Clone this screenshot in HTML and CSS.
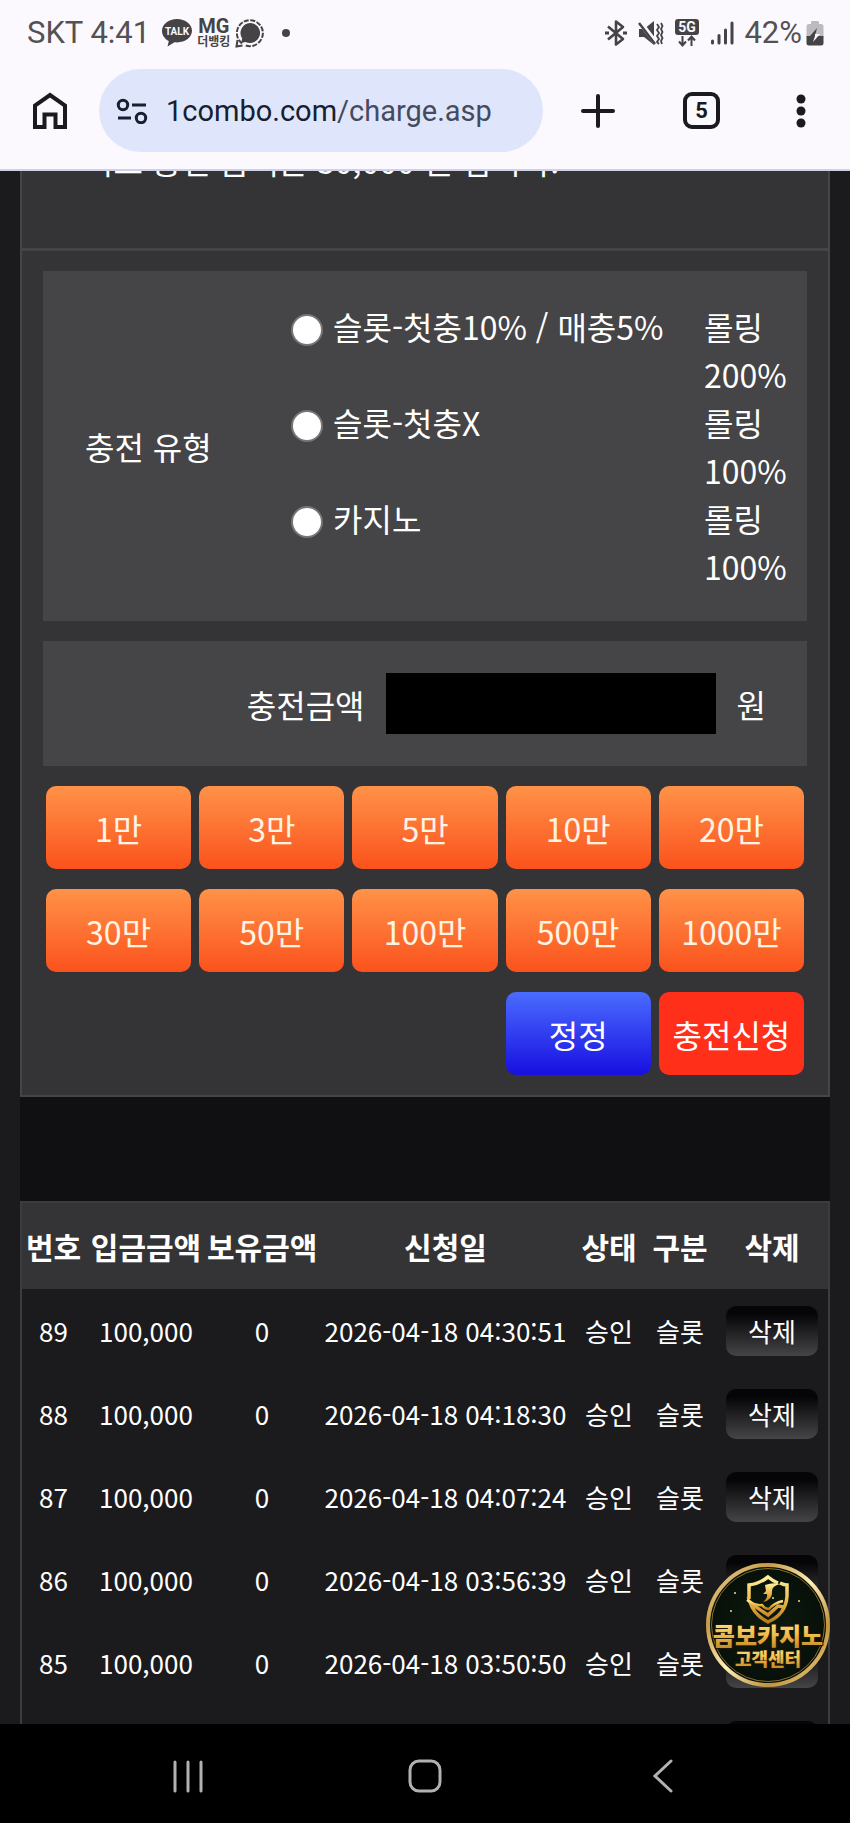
FILE: index.html
```html
<!DOCTYPE html>
<html lang="ko">
<head>
    <meta charset="utf-8">
    <meta name="viewport" content="width=device-width, initial-scale=1.0">
    <title>1combo.com</title>
    <link rel="stylesheet" href="styles.css">
</head>
<body>
<div class="phone">

    <!-- status bar + browser bar -->
    <header class="top">
        <div class="status">
            <span class="clock">SKT 4:41</span>
            <svg class="ic-talk" viewBox="0 0 30 28" width="30" height="28">
                <path d="M15 0C6.700 0 0 5.300 0 12c0 4.300 2.700 8 6.800 10.100L5.500 27.500l7-4.200c.8.100 1.600.1 2.500.1 8.300 0 15-5.100 15-11.600S23.300 0 15 0z" fill="#464346"/>
                <text x="15" y="16" text-anchor="middle" class="talk-text">TALK</text>
            </svg>
            <span class="mg"><b>MG</b><small>더뱅킹</small></span>
            <svg viewBox="0 0 30 30" width="30" height="30">
                <path d="M7 25.500A13 13 0 1 1 10 27.200" fill="none" stroke="#464346" stroke-width="2" stroke-dasharray="5 1.500"/>
                <path d="M15 5a10 10 0 1 1-4.500 18.900L6 25l1.200-4.500A10 10 0 0 1 15 5z" fill="#464346"/>
                <path d="M2.500 22L1.500 28.500l6-1" fill="none" stroke="#464346" stroke-width="2"/>
            </svg>
            <i class="more-dot"></i>

            <span class="right">
                <svg viewBox="0 0 24 28" width="24" height="28" fill="none" stroke="#464346" stroke-width="2.600" stroke-linejoin="round">
                    <path d="M4 7.500l15 12.500-7 5.500v-23L19 8 4 20.500"/>
                    <path d="M1 14h4M19 14h4" stroke-width="3"/>
                </svg>
                <svg viewBox="0 0 26 26" width="26" height="26">
                    <path d="M1 9h5l10-8v24L6 17H1z" fill="#464346"/>
                    <path d="M1 1l17 22" stroke="#fbf9fd" stroke-width="5"/>
                    <path d="M1 3l16 21" stroke="#464346" stroke-width="2.500"/>
                    <path d="M19 4l2 3-2 3 2 3-2 3 2 3-2 3 2 2M23 3l1.500 3L23 9l1.500 3L23 15l1.500 3L23 21l1 3" fill="none" stroke="#464346" stroke-width="1.800"/>
                </svg>
                <svg viewBox="0 0 26 30" width="26" height="30">
                    <rect x="1" y="1" width="24" height="16" rx="3" fill="#464346"/>
                    <text x="13" y="14" text-anchor="middle" class="net-text">5G</text>
                    <path d="M8.500 18v9M5 23.500l3.500 4 3.500-4M17.500 28v-9M14 22.500l3.500-4 3.500 4" fill="none" stroke="#464346" stroke-width="2"/>
                </svg>
                <svg viewBox="0 0 24 24" width="24" height="24" fill="none" stroke="#464346" stroke-width="3" stroke-linecap="round">
                    <path d="M2.500 20v2M9 14.500V22M15.500 9v13M22 2v20"/>
                </svg>
                <span class="clock">42%</span>
                <svg viewBox="0 0 18 26" width="18" height="26">
                    <path d="M5 2q0-1 1-1h6q1 0 1 1v2h2q2.500 0 2.500 2.500V17H.5V6.500Q.5 4 3 4h2z" fill="#bdbbbe"/>
                    <path d="M.5 16h17v7q0 2.500-2.500 2.500H3Q.5 25.500.5 23z" fill="#464346"/>
                    <path d="M11 8L4 16h5z" fill="#464346"/>
                    <path d="M9 14h5l-7 8 2-6z" fill="#fbf9fd"/>
                </svg>
            </span>
        </div>

        <div class="bar">
            <button class="ic" type="button" aria-label="홈">
                <svg viewBox="0 0 36 38" width="36" height="38" fill="none" stroke="#1b1a1f" stroke-width="4">
                    <path d="M3 35V13.500L18 3l15 10.500V35h-9.500V22.500h-11V35z"/>
                </svg>
            </button>
            <a class="url" href="#">
                <svg viewBox="0 0 32 26" width="32" height="26" fill="none" stroke="#16202f" stroke-width="3">
                    <circle cx="7" cy="7" r="4.700"/>
                    <path d="M16 7h14M2 20h13"/>
                    <circle cx="25" cy="20" r="4.700"/>
                </svg>
                <span>1combo.com<span class="path">/charge.asp</span></span>
            </a>
            <button class="ic wide" type="button" aria-label="새 탭">
                <svg viewBox="0 0 34 34" width="34" height="34" stroke="#1b1a1f" stroke-width="4" stroke-linecap="round">
                    <path d="M17 2v30M2 17h30"/>
                </svg>
            </button>
            <button class="ic" type="button"><span class="tabs">5</span></button>
            <button class="ic" type="button" aria-label="메뉴">
                <svg viewBox="0 0 10 34" width="10" height="34" fill="#1b1a1f">
                    <circle cx="5" cy="5" r="4.500"/><circle cx="5" cy="17" r="4.500"/><circle cx="5" cy="29" r="4.500"/>
                </svg>
            </button>
        </div>
    </header>

    <!-- page -->
    <main class="view">
        <form class="charge" onsubmit="return false">
            <p class="notice">최소 충전 금액은 30,000 원 입니다.</p>

            <div class="inner">
                <div class="box types">
                    <div class="tit" id="type-tit">충전 유형</div>
                    <div class="list" role="radiogroup" aria-labelledby="type-tit">
                        <div class="opt"><label><input type="radio" name="ctype" value="1">슬롯-첫충10% / 매충5%</label><span class="roll">롤링 200%</span></div>
                        <div class="opt"><label><input type="radio" name="ctype" value="2">슬롯-첫충X</label><span class="roll">롤링 100%</span></div>
                        <div class="opt"><label><input type="radio" name="ctype" value="3">카지노</label><span class="roll">롤링 100%</span></div>
                    </div>
                </div>

                <div class="box money">
                    <label for="money">충전금액</label>
                    <input type="text" id="money" name="money">
                    <span>원</span>
                </div>

                <div class="btns">
                    <button type="button" onclick="addMoney(1)">1만</button>
                    <button type="button" onclick="addMoney(3)">3만</button>
                    <button type="button" onclick="addMoney(5)">5만</button>
                    <button type="button" onclick="addMoney(10)">10만</button>
                    <button type="button" onclick="addMoney(20)">20만</button>
                    <button type="button" onclick="addMoney(30)">30만</button>
                    <button type="button" onclick="addMoney(50)">50만</button>
                    <button type="button" onclick="addMoney(100)">100만</button>
                    <button type="button" onclick="addMoney(500)">500만</button>
                    <button type="button" onclick="addMoney(1000)">1000만</button>
                    <button type="reset" class="blue">정정</button>
                    <button type="submit" class="red">충전신청</button>
                </div>
            </div>
        </form>

        <div class="space"></div>

        <table class="history">
            <colgroup>
                <col class="c-no"><col class="c-in"><col class="c-have"><col><col class="c-state"><col class="c-kind"><col class="c-del">
            </colgroup>
            <thead>
                <tr><th>번호</th><th>입금금액</th><th>보유금액</th><th>신청일</th><th>상태</th><th>구분</th><th>삭제</th></tr>
            </thead>
            <tbody>
                <tr><td>89</td><td>100,000</td><td>0</td><td>2026-04-18 04:30:51</td><td>승인</td><td>슬롯</td><td><button type="button" class="del">삭제</button></td></tr>
                <tr><td>88</td><td>100,000</td><td>0</td><td>2026-04-18 04:18:30</td><td>승인</td><td>슬롯</td><td><button type="button" class="del">삭제</button></td></tr>
                <tr><td>87</td><td>100,000</td><td>0</td><td>2026-04-18 04:07:24</td><td>승인</td><td>슬롯</td><td><button type="button" class="del">삭제</button></td></tr>
                <tr><td>86</td><td>100,000</td><td>0</td><td>2026-04-18 03:56:39</td><td>승인</td><td>슬롯</td><td><button type="button" class="del"></button></td></tr>
                <tr><td>85</td><td>100,000</td><td>0</td><td>2026-04-18 03:50:50</td><td>승인</td><td>슬롯</td><td><button type="button" class="del"></button></td></tr>
                <tr><td></td><td></td><td></td><td></td><td></td><td></td><td><button type="button" class="del"></button></td></tr>
            </tbody>
        </table>

        <!-- floating customer center button -->
        <a class="center" href="#">
            <svg viewBox="0 0 124 124" width="124" height="124">
                <defs>
                    <linearGradient id="ring" x1="0" y1="0" x2="1" y2="1">
                        <stop offset="0" stop-color="#f3dfa0"/><stop offset=".25" stop-color="#c79a48"/>
                        <stop offset=".5" stop-color="#fff0b8"/><stop offset=".75" stop-color="#c0943e"/>
                        <stop offset="1" stop-color="#f0d688"/>
                    </linearGradient>
                    <linearGradient id="gold" x1="0" y1="0" x2="0" y2="1">
                        <stop offset="0" stop-color="#fff0a0"/><stop offset=".5" stop-color="#f0bd4a"/>
                        <stop offset="1" stop-color="#b97a1e"/>
                    </linearGradient>
                    <radialGradient id="dark">
                        <stop offset="0" stop-color="#0e1a0e"/><stop offset="1" stop-color="#061009"/>
                    </radialGradient>
                </defs>
                <circle cx="62" cy="62" r="60" fill="url(#dark)" stroke="url(#ring)" stroke-width="4"/>
                <circle cx="62" cy="62" r="56.500" fill="none" stroke="#8a6c2c" stroke-width="1"/>
                <path d="M74 20q4 2 7 2v11q-1 18-19 26-14-7-18-20 8 7 18 13l10-9 6 1M43 36V22q10-1 19-8 5 4 10 6" fill="none" stroke="url(#gold)" stroke-width="3.500"/>
                <path d="M41 37q8 6 15 5 3 4 7 4 5-6 14-8" fill="none" stroke="url(#gold)" stroke-width="2.500"/>
                <path d="M59 22q8-3 15-1-8 2-8 7 1 9-9 11 5-4 4-8h-4l3-3z" fill="url(#gold)"/>
                <g fill="#e8d9a0"><circle cx="67" cy="35" r="1"/><circle cx="93" cy="38" r="1"/><circle cx="29" cy="30" r="1"/><circle cx="25" cy="48" r="1"/></g>
                <text x="62" y="82" text-anchor="middle" class="big">콤보카지노</text>
                <text x="62" y="103" text-anchor="middle" class="sub">고객센터</text>
            </svg>
        </a>
    </main>

    <!-- android navigation -->
    <nav class="nav">
        <button type="button" aria-label="최근 앱">
            <svg viewBox="0 0 32 34" width="32" height="34"><path d="M4 3v29M17 3v29M30 3v29"/></svg>
        </button>
        <button type="button" aria-label="홈 화면">
            <svg viewBox="0 0 34 34" width="34" height="34"><rect x="2" y="2" width="30" height="30" rx="9"/></svg>
        </button>
        <button type="button" aria-label="뒤로">
            <svg viewBox="0 0 20 34" width="20" height="34"><path d="M18 2L2 17l16 15"/></svg>
        </button>
    </nav>
</div>

<script>
    var money = document.getElementById('money');
    function addMoney(n) {
        var now = parseInt(money.value.replace(/,/g, '')) || 0;
        money.value = (now + n * 10000).toLocaleString();
    }
</script>
</body>
</html>
```

FILE: styles.css
```css
* {
    box-sizing: border-box;
}

body {
    margin: 0;
    background: #1b1a1c;
    color: #fff;
    font-family: "Noto Sans CJK KR", sans-serif;
    font-size: 32px;
    line-height: 48px;
}

button, input {
    font: inherit;
    color: inherit;
    border: 0;
    padding: 0;
    margin: 0;
}

.phone {
    display: flex;
    flex-direction: column;
    height: 100vh;
}

/* top */
.top {
    background: #fbf9fd;
    border-bottom: 2px solid #cfd2e6;
    font-family: Roboto, "Noto Sans CJK KR", sans-serif;
    flex: none;
}

.status {
    display: flex;
    align-items: center;
    height: 69px;
    padding: 0 26px 4px 27px;
    color: #545154;
}

.clock {
    font-size: 31px;
    line-height: 30px;
}

.ic-talk {
    margin-left: 12px;
}

.talk-text {
    font: bold 10px Roboto, sans-serif;
    fill: #fbf9fd;
}

.net-text {
    font: bold 14px Roboto, sans-serif;
    fill: #fbf9fd;
}

.mg {
    display: flex;
    flex-direction: column;
    align-items: center;
    margin: 0 5px;
    color: #464346;
}

.mg b {
    font-size: 20px;
    line-height: 18px;
}

.mg small {
    font-size: 12px;
    font-weight: bold;
    line-height: 14px;
}

.more-dot {
    width: 8px;
    height: 8px;
    margin-left: 17px;
    border-radius: 50%;
    background: #464346;
}

.right {
    display: flex;
    align-items: center;
    gap: 10px;
    margin-left: auto;
}

.right .clock + svg {
    margin-left: -6px;
}

.bar {
    display: flex;
    align-items: center;
    padding-bottom: 17px;
}

.ic {
    display: flex;
    align-items: center;
    justify-content: center;
    width: 99px;
    height: 83px;
    background: none;
    flex: none;
}

.ic.wide {
    width: 109px;
}

.url {
    display: flex;
    flex: 1;
    align-items: center;
    gap: 18px;
    height: 83px;
    padding-left: 17px;
    border-radius: 42px;
    background: #dfe6fb;
    color: #16202f;
    font-size: 29px;
    text-decoration: none;
    white-space: nowrap;
}

.path {
    color: #454b5e;
}

.tabs {
    width: 37px;
    height: 37px;
    border: 4px solid #1b1a1f;
    border-radius: 9px;
    color: #1b1a1f;
    font-size: 22px;
    font-weight: bold;
    line-height: 29px;
}

/* page */
.view {
    position: relative;
    flex: 1;
    min-height: 0;
    padding: 0 20px;
    overflow: hidden;
}

.charge {
    border: 2px solid #454446;
    border-top: 0;
    background: #343335;
}

/* page is scrolled a little past the notice */
.notice {
    margin: -35px 0 0;
    padding: 0 62px 64px;
    border-bottom: 3px solid #454446;
}

.inner {
    display: grid;
    gap: 20px;
    padding: 20px 21px;
}

.box {
    display: flex;
    align-items: center;
    background: #454446;
}

.types {
    padding: 31px 13px 31px 42px;
}

.tit {
    width: 206px;
}

.list {
    flex: 1;
}

.opt {
    display: flex;
    justify-content: space-between;
}

.opt label {
    display: flex;
    align-items: flex-start;
}

.opt input {
    appearance: none;
    width: 32px;
    height: 32px;
    margin: 12px 10px 0 0;
    border: 2px solid #767577;
    border-radius: 50%;
    background: #fff;
}

.opt input:checked {
    border: 9px solid #fff;
    background: #1a66d8;
}

.roll {
    width: 90px;
}

.money {
    justify-content: flex-end;
    gap: 21px;
    padding: 32px 41px;
}

.money input {
    width: 330px;
    height: 61px;
    padding: 0 12px;
    background: #000;
    text-align: right;
}

.btns {
    display: grid;
    grid-template-columns: repeat(5, 1fr);
    gap: 20px 8px;
    padding: 0 3px;
}

.btns button {
    height: 83px;
    border-radius: 10px;
    background: linear-gradient(#ff9248, #fb521c);
    color: #fff4e4;
}

.btns .blue {
    grid-column: 4;
    background: linear-gradient(#4a6cff, #180fe0);
    color: #fff;
}

.btns .red {
    background: #ff2f1a;
    color: #fff;
}

.space {
    height: 104px;
    background: #100f11;
}

/* history */
.history {
    width: 100%;
    border: 2px solid #3c3b3e;
    border-spacing: 0;
    table-layout: fixed;
    text-align: center;
    white-space: nowrap;
}

.c-no { width: 63px; }
.c-in { width: 122px; }
.c-have { width: 110px; }
.c-state { width: 70px; }
.c-kind { width: 72px; }
.c-del { width: 112px; }

.history th {
    height: 86px;
    padding: 0;
    background: #343335;
    font-size: 30px;
}

.history td {
    height: 83px;
    padding: 0;
    font-size: 26px;
}

.del {
    display: block;
    width: 92px;
    height: 50px;
    margin: 0 auto;
    border-radius: 10px;
    background: linear-gradient(#050406 15%, #454447);
}

.center {
    position: absolute;
    right: 20px;
    bottom: 37px;
    width: 124px;
    height: 124px;
}

.center text {
    font-family: "Noto Sans CJK KR", sans-serif;
    font-weight: 900;
    fill: url(#gold);
    stroke: #1c1404;
    stroke-width: 2px;
    paint-order: stroke;
}

.center .big {
    font-size: 24px;
}

.center .sub {
    font-size: 18px;
}

/* android navigation */
.nav {
    display: grid;
    grid-template-columns: repeat(3, 1fr);
    flex: none;
    height: 99px;
    padding: 0 8%;
    background: #000;
}

.nav button {
    height: 104px;
    background: none;
    line-height: 0;
}

.nav svg {
    fill: none;
    stroke: #b2b0b3;
    stroke-width: 3px;
    stroke-linecap: round;
}
```
